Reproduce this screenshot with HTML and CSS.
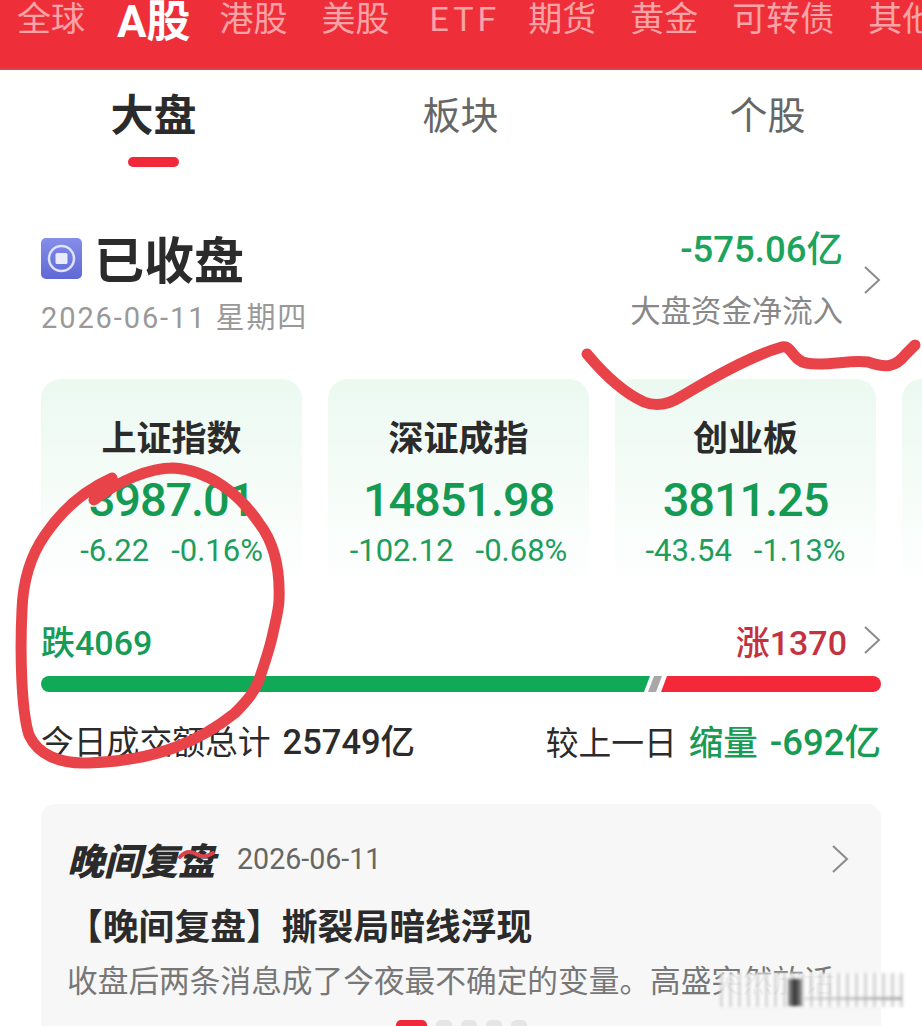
FILE: index.html
```html
<!DOCTYPE html>
<html lang="zh-CN">
<head>
    <meta charset="UTF-8">
    <meta name="viewport" content="width=device-width, initial-scale=1.0">
    <title>大盘</title>
    <link rel="stylesheet" href="styles.css">
</head>
<body>

    <!-- Market tabs -->
    <nav class="market-nav">
        <span>全球</span>
        <span class="active">A股</span>
        <span>港股</span>
        <span>美股</span>
        <span class="latin">ETF</span>
        <span>期货</span>
        <span>黄金</span>
        <span>可转债</span>
        <span>其他</span>
    </nav>

    <!-- Sub tabs -->
    <div class="sub-nav">
        <span class="sub-tab active">大盘</span>
        <span class="sub-tab">板块</span>
        <span class="sub-tab">个股</span>
    </div>

    <!-- Status -->
    <section class="status">
        <div class="status-left">
            <div class="status-title">
                <svg class="status-icon" viewBox="0 0 41 41">
                    <defs>
                        <linearGradient id="coin" x1="0" y1="0" x2="0" y2="1">
                            <stop offset="0" stop-color="#858ee8"/>
                            <stop offset="1" stop-color="#5f68d6"/>
                        </linearGradient>
                    </defs>
                    <rect width="41" height="41" rx="5" fill="url(#coin)"/>
                    <circle cx="20.5" cy="20.5" r="12.5" fill="none" stroke="#dfe2fa" stroke-width="2.5"/>
                    <rect x="14.5" y="15" width="12" height="11" rx="1.5" fill="#e9ebfc"/>
                </svg>
                <h1>已收盘</h1>
            </div>
            <div class="status-date">2026-06-11 星期四</div>
        </div>
        <div class="status-right">
            <div class="flow-text">
                <div class="flow-value">-575.06亿</div>
                <div class="flow-label">大盘资金净流入</div>
            </div>
            <svg class="chevron" viewBox="0 0 18 30"><path d="M2 2 L16 15 L2 28"/></svg>
        </div>
    </section>

    <!-- Index cards -->
    <div class="index-row">
        <div class="index-card">
            <div class="index-name">上证指数</div>
            <div class="index-value">3987.01</div>
            <div class="index-change"><span>-6.22</span><span>-0.16%</span></div>
        </div>
        <div class="index-card">
            <div class="index-name">深证成指</div>
            <div class="index-value">14851.98</div>
            <div class="index-change"><span>-102.12</span><span>-0.68%</span></div>
        </div>
        <div class="index-card">
            <div class="index-name">创业板</div>
            <div class="index-value">3811.25</div>
            <div class="index-change"><span>-43.54</span><span>-1.13%</span></div>
        </div>
        <div class="index-card"></div>
    </div>

    <!-- Breadth -->
    <div class="breadth">
        <span class="fall">跌4069</span>
        <div class="breadth-right">
            <span class="rise">涨1370</span>
            <svg class="chevron" viewBox="0 0 18 30"><path d="M2 2 L16 15 L2 28"/></svg>
        </div>
    </div>
    <div class="breadth-bar">
        <div class="bar-fall"></div>
        <div class="bar-flat"></div>
        <div class="bar-rise"></div>
    </div>

    <div class="turnover">
        <div class="turnover-part">
            <span>今日成交额总计</span>
            <strong>25749亿</strong>
        </div>
        <div class="turnover-part">
            <span>较上一日</span>
            <strong class="green">缩量</strong>
            <strong class="green delta">-692亿</strong>
        </div>
    </div>

    <!-- Evening review -->
    <section class="review">
        <div class="review-head">
            <div class="review-title">
                <span class="review-name">晚间复盘</span>
                <span class="review-date">2026-06-11</span>
            </div>
            <svg class="chevron" viewBox="0 0 18 30"><path d="M2 2 L16 15 L2 28"/></svg>
        </div>
        <h3>【晚间复盘】撕裂局暗线浮现</h3>
        <p>收盘后两条消息成了今夜最不确定的变量。高盛突然放话</p>
        <div class="dots">
            <span class="dot active"></span>
            <span class="dot"></span>
            <span class="dot"></span>
            <span class="dot"></span>
            <span class="dot"></span>
        </div>
    </section>

    <!-- Blurred watermark -->
    <div class="watermark"></div>

    <!-- Hand drawn marks on top of the screenshot -->
    <svg class="marks" viewBox="0 0 922 1026">
        <path d="M587 354 C602 372 622 392 644 402 C656 407 668 405 682 396 C712 378 750 356 782 347 C792 345 792 360 806 363 C826 367 850 359 868 362 C885 368 895 368 906 354 L915 345"/>
        <path d="M112 478 C85 490 62 510 45 535 C31 555 23 580 22 610 C20 650 21 710 29 735 C38 755 60 764 88 763 C120 762 150 757 176 747 C200 738 220 725 235 713 C250 698 255 690 259 680 C265 662 270 648 273 633 C277 615 279 608 279 600 C280 575 276 545 259 523 C240 495 210 470 173 468 C150 468 120 480 94 500"/>
        <path class="thin" d="M180 857 C186 850 192 851 198 855 C203 858 208 856 213 853"/>
    </svg>

</body>
</html>
```

FILE: styles.css
```css
* {
    box-sizing: border-box;
}

html, body {
    margin: 0;
    padding: 0;
}

body {
    position: relative;
    height: 100vh;
    overflow: hidden;
    background-color: #fff;
    color: #2b2b2b;
    font-family: Roboto, "Noto Sans CJK SC", sans-serif;
}

h1, h3, p {
    margin: 0;
}

/* market tabs */
.market-nav {
    display: flex;
    align-items: flex-start;
    gap: 34px;
    height: 70px;
    padding-left: 17px;
    overflow: hidden;
    background-color: #ee2f3a;
    border-bottom: 2px solid #d9434c;
    color: #f9a3a6;
    font-size: 34px;
    line-height: 38px;
    white-space: nowrap;
}

.market-nav span {
    flex-shrink: 0;
}

.market-nav .latin {
    margin: 0 -6px 0 6px;
    letter-spacing: 4px;
}

.market-nav .active {
    margin: 0 -5px 0 -2px;
    color: #fff;
    font-size: 44px;
    font-weight: 700;
    line-height: 44px;
}

/* sub tabs */
.sub-nav {
    display: grid;
    grid-template-columns: 307px 307px 307px;
    height: 100px;
    padding-top: 21px;
}

.sub-tab {
    justify-self: center;
    height: 77px;
    color: #666;
    font-size: 38px;
    line-height: 50px;
}

.sub-tab.active {
    position: relative;
    color: #2b2b2b;
    font-size: 43px;
    font-weight: 700;
}

.sub-tab.active::after {
    content: "";
    position: absolute;
    left: 17px;
    bottom: 1px;
    width: 51px;
    height: 10px;
    border-radius: 5px;
    background-color: #f0283a;
}

/* status */
.status {
    display: flex;
    justify-content: space-between;
    height: 209px;
    padding: 62px 41px 0;
}

.status-title {
    display: flex;
    align-items: center;
    gap: 12px;
    height: 60px;
}

.status-icon {
    width: 41px;
    height: 41px;
    margin-top: -7px;
}

.status-title h1 {
    font-size: 50px;
    line-height: 60px;
    font-weight: 700;
}

.status-date {
    margin-top: 8px;
    color: #999;
    font-size: 29px;
    line-height: 36px;
    letter-spacing: 1.9px;
}

.status-right {
    display: flex;
    align-items: center;
    gap: 20px;
    height: 100px;
    margin-top: -2px;
}

.flow-text {
    text-align: right;
}

.flow-value {
    color: #1ca45c;
    font-size: 36.5px;
    line-height: 44px;
    font-weight: 500;
}

.flow-label {
    margin-top: 20px;
    color: #888;
    font-size: 30.4px;
    line-height: 40px;
}

.chevron {
    flex-shrink: 0;
    width: 18px;
    height: 30px;
}

.chevron path {
    fill: none;
    stroke: #8a8a8a;
    stroke-width: 2;
}

/* index cards */
.index-row {
    display: flex;
    gap: 26px;
    height: 211px;
    padding-left: 41px;
    overflow: hidden;
}

.index-card {
    flex: 0 0 261px;
    padding-top: 38px;
    border-radius: 20px;
    background: linear-gradient(#ebf9f1, #fff);
    text-align: center;
}

.index-name {
    font-size: 35px;
    line-height: 46px;
    font-weight: 700;
}

.index-value {
    margin-top: 7px;
    color: #149a52;
    font-size: 47px;
    line-height: 60px;
    font-weight: 500;
    letter-spacing: -1.1px;
}

.index-change {
    display: flex;
    justify-content: center;
    gap: 22px;
    margin-top: 4px;
    color: #1f9d5b;
    font-size: 31px;
    line-height: 34px;
}

/* breadth */
.breadth {
    display: flex;
    justify-content: space-between;
    align-items: center;
    height: 44px;
    margin-top: 28px;
    padding: 0 41px;
    font-size: 34px;
    font-weight: 500;
}

.breadth-right {
    display: flex;
    align-items: center;
    gap: 16px;
}

.fall {
    color: #169c55;
}

.rise {
    color: #c4323f;
}

.breadth-bar {
    display: flex;
    height: 16px;
    margin: 14px 41px 0;
}

.bar-fall {
    width: 609px;
    border-radius: 8px 0 0 8px;
    background-color: #0fa958;
    clip-path: polygon(0 0, 100% 0, calc(100% - 6px) 100%, 0 100%);
}

.bar-flat {
    width: 14px;
    margin-left: -2px;
    background-color: #a8a8a8;
    clip-path: polygon(6px 0, 100% 0, calc(100% - 6px) 100%, 0 100%);
}

.bar-rise {
    flex: 1;
    margin-left: -1px;
    border-radius: 0 8px 8px 0;
    background-color: #f5283a;
    clip-path: polygon(6px 0, 100% 0, 100% 100%, 0 100%);
}

.turnover {
    display: flex;
    justify-content: space-between;
    align-items: center;
    height: 50px;
    margin-top: 22px;
    padding: 0 41px;
    font-size: 32.8px;
}

.turnover-part {
    display: flex;
    align-items: baseline;
    gap: 12px;
}

.turnover strong {
    font-size: 34.5px;
    font-weight: 500;
}

.turnover .green {
    color: #169c55;
}

.turnover .delta {
    font-size: 36.5px;
}

/* evening review */
.review {
    height: 240px;
    margin: 40px 41px 0;
    padding: 26px 32px 0 26px;
    border-radius: 14px;
    background-color: #f7f7f7;
}

.review-head {
    display: flex;
    justify-content: space-between;
    align-items: center;
    height: 58px;
}

.review-title {
    display: flex;
    align-items: center;
    gap: 22px;
}

.review-name {
    font-size: 37px;
    font-weight: 900;
    font-style: italic;
}

.review-date {
    color: #666;
    font-size: 28.6px;
}

.review h3 {
    margin-top: 16px;
    font-size: 35.8px;
    line-height: 48px;
    font-weight: 700;
}

.review p {
    margin-top: 8px;
    color: #777;
    font-size: 30.7px;
    line-height: 44px;
    white-space: nowrap;
    overflow: hidden;
}

.dots {
    display: flex;
    justify-content: center;
    gap: 9px;
    margin-top: 16px;
    padding-left: 6px;
}

.dot {
    width: 16px;
    height: 16px;
    border-radius: 5px;
    background-color: #e5e5e5;
}

.dot.active {
    width: 31px;
    background-color: #f0283a;
}

/* watermark and pen marks */
.watermark {
    position: absolute;
    left: 720px;
    top: 973px;
    width: 183px;
    height: 34px;
    background:
        repeating-linear-gradient(90deg, rgba(120, 120, 120, 0.28) 0 3px, rgba(255, 255, 255, 0) 3px 9px),
        rgba(250, 250, 250, 0.92);
    filter: blur(1.5px);
}

.watermark::before {
    content: "";
    position: absolute;
    left: 68px;
    top: 6px;
    width: 14px;
    height: 27px;
    background: linear-gradient(90deg, #999, #333 50%, #999);
}

.watermark::after {
    content: "";
    position: absolute;
    left: 84px;
    top: 24px;
    width: 98px;
    height: 3px;
    background: linear-gradient(90deg, rgba(170, 170, 170, 0.3), #aaa);
}

.marks {
    position: absolute;
    left: 0;
    top: 0;
    width: 922px;
    height: 1026px;
    pointer-events: none;
}

.marks path {
    fill: none;
    stroke: #e9434a;
    stroke-width: 11;
    stroke-linecap: round;
    stroke-linejoin: round;
}

.marks .thin {
    stroke-width: 4;
    stroke: #d8434d;
}
```
